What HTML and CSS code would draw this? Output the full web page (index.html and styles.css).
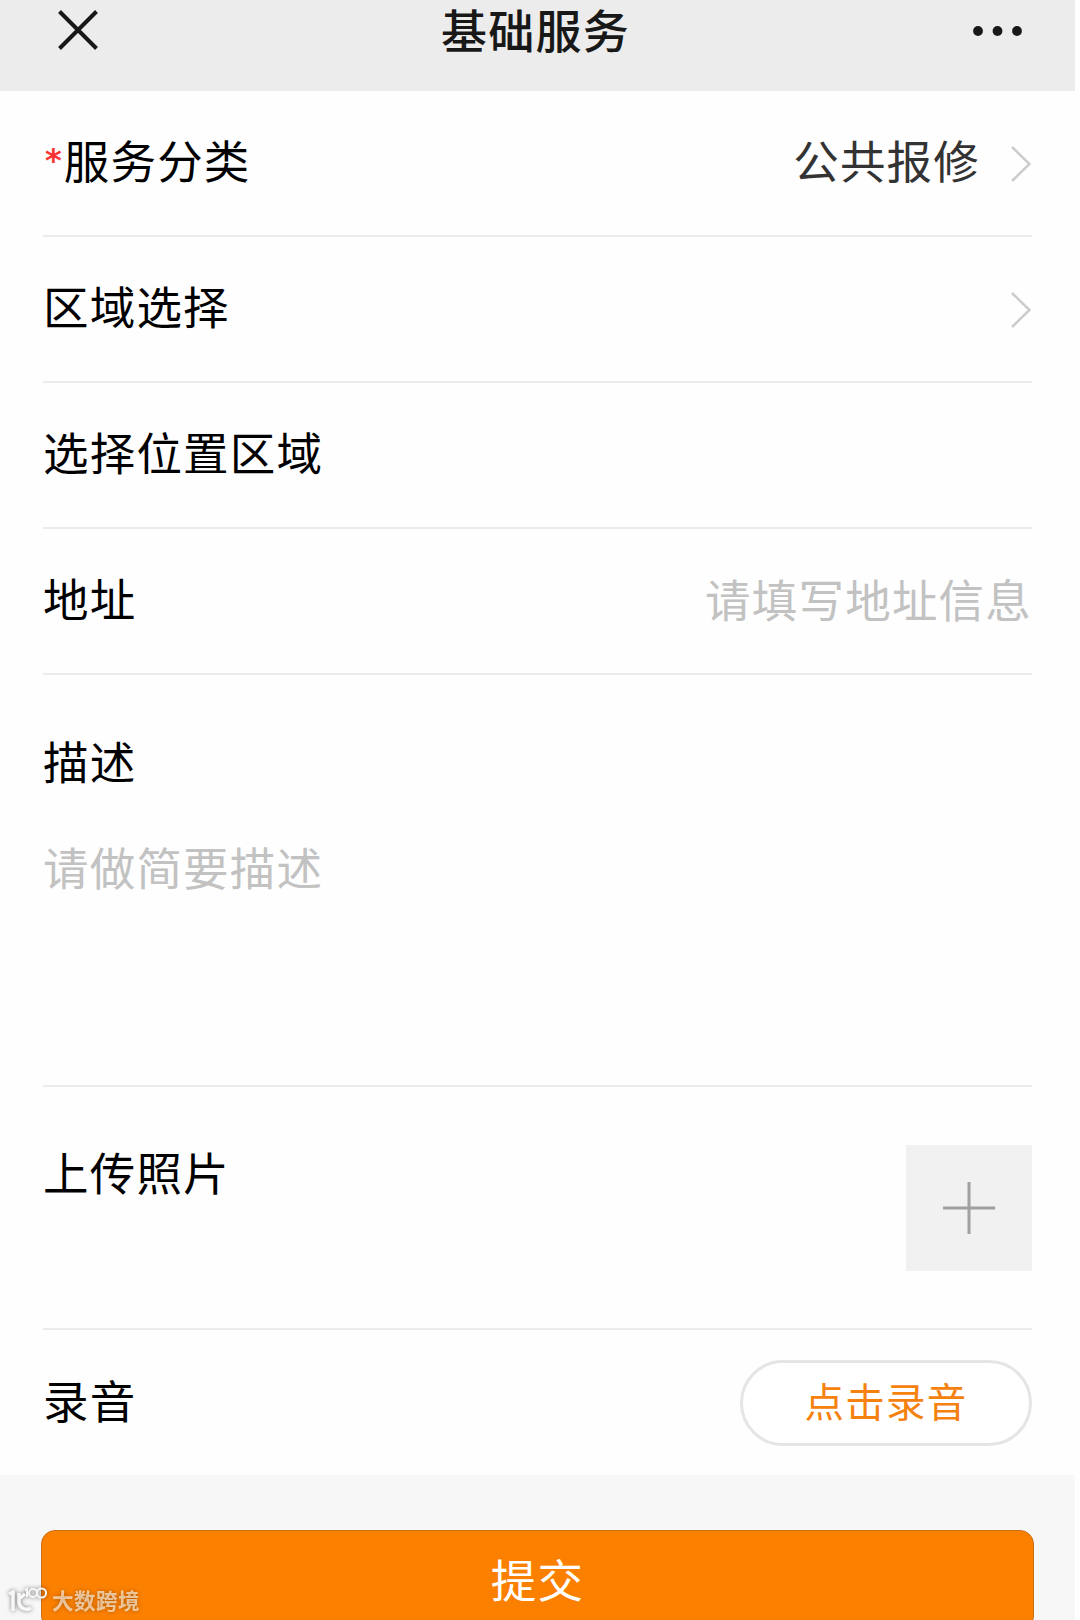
FILE: index.html
```
<!DOCTYPE html>
<html lang="zh-CN">
<head>
    <meta charset="UTF-8">
    <meta name="viewport" content="width=device-width, initial-scale=1.0">
    <title>基础服务</title>
    <link rel="stylesheet" href="styles.css">
</head>
<body>
    <div class="page">
        <header class="navbar">
            <svg class="close" viewBox="0 0 40 40"><path d="M1.5 1.5L38.5 38.5M38.5 1.5L1.5 38.5"/></svg>
            <h1>基础服务</h1>
            <svg class="more" viewBox="0 0 50 10">
                <circle cx="5" cy="5" r="4.9"/>
                <circle cx="24.5" cy="5" r="4.9"/>
                <circle cx="44" cy="5" r="4.9"/>
            </svg>
        </header>

        <main class="form">
            <div class="row">
                <span class="label"><span class="required">*</span>服务分类</span>
                <span class="value">公共报修</span>
                <svg class="arrow" viewBox="0 0 20 36"><path d="M1 1L18.5 18L1 35"/></svg>
            </div>
            <div class="row">
                <span class="label">区域选择</span>
                <svg class="arrow" viewBox="0 0 20 36"><path d="M1 1L18.5 18L1 35"/></svg>
            </div>
            <div class="row">
                <span class="label">选择位置区域</span>
            </div>
            <div class="row">
                <span class="label">地址</span>
                <span class="placeholder">请填写地址信息</span>
            </div>
            <div class="row desc">
                <span class="label">描述</span>
                <span class="placeholder">请做简要描述</span>
            </div>
            <div class="row upload">
                <span class="label">上传照片</span>
                <div class="add-photo">
                    <svg viewBox="0 0 52 52"><path d="M0 26H52M26 0V52"/></svg>
                </div>
            </div>
            <div class="row record">
                <span class="label">录音</span>
                <button class="record-btn">点击录音</button>
            </div>
        </main>

        <footer class="footer">
            <button class="submit">提交</button>
        </footer>

        <div class="watermark">
            <svg viewBox="0 0 40 28">
                <path d="M1 8L5 6V25M11 7V17A8 8 0 0 0 23 22M11 13L17 8"/>
                <path class="thin" d="M17 4L19 3V11"/>
                <circle class="thin" cx="25" cy="7" r="4"/>
                <circle class="thin" cx="33.5" cy="7" r="4.6"/>
            </svg>
            <span>大数跨境</span>
        </div>
    </div>
</body>
</html>
```
FILE: styles.css
```
* {
    box-sizing: border-box;
}
body {
    background-color: #fefefe;
    font-family: "Noto Sans CJK SC", sans-serif;
    margin: 0;
}
.page {
    position: relative;
    width: 1075px;
    height: 1620px;
    overflow: hidden;
    font-size: 45.5px;
    letter-spacing: 1.2px;
    line-height: 66px;
}
svg {
    fill: none;
    flex-shrink: 0;
}

/* top bar */
.navbar {
    background-color: #ececec;
    display: flex;
    align-items: flex-start;
    justify-content: space-between;
    height: 91px;
    padding: 0 52px 0 58px;
}
.navbar h1 {
    color: #181818;
    font-size: 46px;
    font-weight: 500;
    line-height: 56px;
    letter-spacing: 1.2px;
    margin: 0;
}
.close {
    width: 40px;
    height: 40px;
    margin-top: 10px;
    stroke: #181818;
    stroke-width: 4;
}
.more {
    width: 50px;
    height: 10px;
    margin-top: 26px;
    fill: #181818;
}

/* form rows */
.form {
    background-color: #fefefe;
    padding: 0 43px;
}
.row {
    border-bottom: 2px solid #ebebeb;
    display: flex;
    align-items: flex-start;
    height: 146px;
    padding-top: 35px;
}
.label {
    color: #000;
    flex-grow: 1;
}
.required {
    color: #fa3434;
    font-family: "DejaVu Sans", sans-serif;
    font-size: 32px;
    font-weight: 700;
    letter-spacing: 0;
    line-height: 1;
    margin: 0 2px 0 2px;
    vertical-align: 8px;
}
.value {
    color: #333;
}
.arrow {
    width: 20px;
    height: 36px;
    margin: 20px 1px 0 31px;
    stroke: #ccc;
    stroke-width: 2.5;
}
.placeholder {
    color: #c2c2c2;
    margin-top: 1px;
}
.desc {
    flex-direction: column;
    height: 412px;
    padding-top: 52px;
}
.desc .label {
    flex-grow: 0;
}
.desc .placeholder {
    margin-top: 40px;
}
.upload {
    height: 243px;
    padding-top: 51px;
}
.add-photo {
    background-color: #f1f1f1;
    display: flex;
    align-items: center;
    justify-content: center;
    width: 126px;
    height: 126px;
    margin-top: 7px;
}
.add-photo svg {
    width: 52px;
    height: 52px;
    stroke: #a0a0a0;
    stroke-width: 3;
}
.record {
    border-bottom: none;
    height: 145px;
    padding-top: 36px;
}
.record-btn {
    background-color: #fff;
    border: 3px solid #e5e5e5;
    border-radius: 43px;
    color: #f5820f;
    font-family: inherit;
    font-size: 39.5px;
    letter-spacing: 1.2px;
    line-height: 60px;
    width: 292px;
    height: 86px;
    margin-top: -6px;
    padding: 0 0 6px;
}

/* submit area */
.footer {
    background-color: #f7f7f7;
    height: 145px;
    padding: 55px 41px 0;
}
.submit {
    background-color: #fc8000;
    border: 1px solid #c96f14;
    border-radius: 14px;
    color: #fff;
    font-family: inherit;
    font-size: 45.5px;
    letter-spacing: 1.2px;
    line-height: 66px;
    width: 100%;
    height: 100px;
    padding: 0 0 5px;
}

.watermark {
    position: absolute;
    left: 8px;
    bottom: 6px;
    display: flex;
    align-items: center;
    gap: 4px;
    color: rgba(255, 255, 255, 0.6);
    filter: drop-shadow(0 0 2px rgba(0, 0, 0, 0.5));
    font-size: 21.5px;
    font-weight: 700;
    letter-spacing: 0.5px;
    line-height: 28px;
}
.watermark svg {
    width: 40px;
    height: 28px;
    stroke: #f7f7f7;
    stroke-width: 3.5;
}
.watermark .thin {
    stroke-width: 2;
}
```
